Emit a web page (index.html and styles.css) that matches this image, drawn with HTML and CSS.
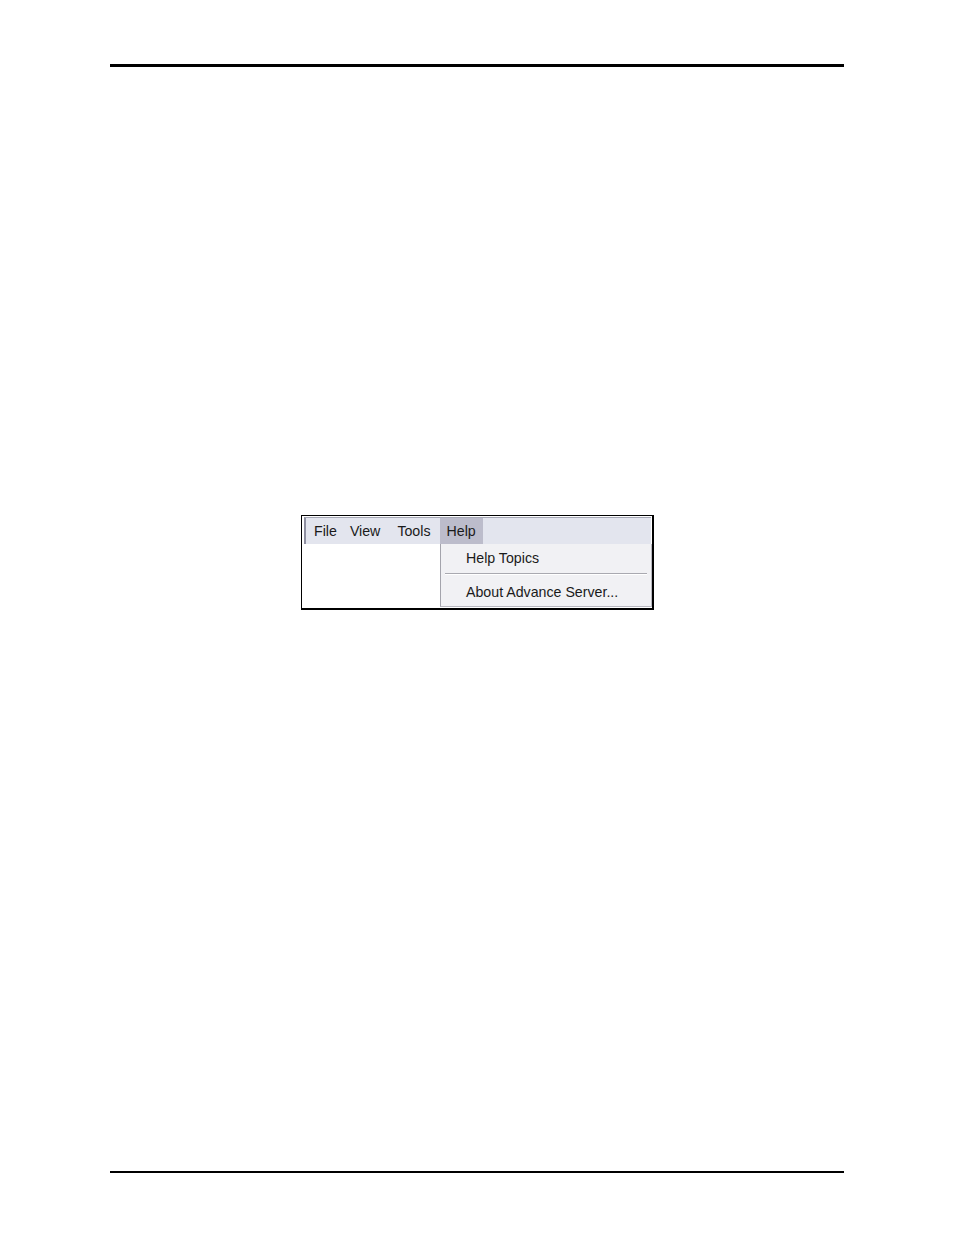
FILE: index.html
```html
<!DOCTYPE html>
<html>
<head>
<meta charset="utf-8">
<link rel="stylesheet" href="styles.css">
</head>
<body>
<div class="page">
  <div class="rule-top"></div>
  <div class="figure">
    <div class="menubar">
      <span class="item item-file">File</span>
      <span class="item item-view">View</span>
      <span class="item item-tools">Tools</span>
      <span class="item item-help active">Help</span>
    </div>
    <div class="canvas"></div>
    <div class="dropdown">
      <div class="entry">Help Topics</div>
      <div class="sep"></div>
      <div class="entry">About Advance Server...</div>
    </div>
  </div>
  <div class="rule-bottom"></div>
</div>
</body>
</html>
```
FILE: styles.css
```css
html, body {
  margin: 0;
  padding: 0;
  background: #ffffff;
}
.page {
  width: 954px;
  height: 1235px;
  padding-top: 64px;
  box-sizing: border-box;
  font-family: "Liberation Sans", Arial, sans-serif;
}
.rule-top {
  margin-left: 110px;
  width: 734px;
  height: 3px;
  background: #000;
}
.figure {
  position: relative;
  margin-top: 448px;
  margin-left: 301px;
  width: 348px;
  height: 91px;
  border-top: 1px solid #000;
  border-left: 1px solid #000;
  border-right: 2px solid #000;
  border-bottom: 2px solid #000;
  background: #fff;
  padding: 1px 0 0 2px;
}
.menubar {
  display: flex;
  align-items: stretch;
  height: 26px;
  width: 345px;
  background: #e3e5ee;
  border-top: 1px solid #a6a8b6;
  border-left: 2px solid #8e8fa0;
  font-size: 14.2px;
  color: #1a1a1a;
}
.item {
  display: flex;
  align-items: center;
}
.item-file { margin-left: 8px; }
.item-view { margin-left: 13px; }
.item-tools { margin-left: 17px; }
.item-help {
  margin-left: 9px;
  padding: 0 7px 0 7px;
  background: #bcbccb;
}
.canvas {
  height: 64px;
}
.dropdown {
  position: absolute;
  left: 138px;
  top: 28px;
  width: 210px;
  height: 62px;
  background: #f1f1f4;
  border-left: 1px solid #a4a4ac;
  border-right: 1px solid #b8b8c0;
  border-bottom: 1px solid #b8b8c0;
  font-size: 14.2px;
  color: #1a1a1a;
}
.entry {
  padding-left: 25px;
  height: 28px;
  line-height: 28px;
}
.sep {
  margin: 1px 4px 3px 4px;
  height: 1px;
  background: #a9a9b0;
  border-bottom: 1px solid #ffffff;
}
.rule-bottom {
  margin-top: 561px;
  margin-left: 110px;
  width: 734px;
  height: 2px;
  background: #000;
}
```
